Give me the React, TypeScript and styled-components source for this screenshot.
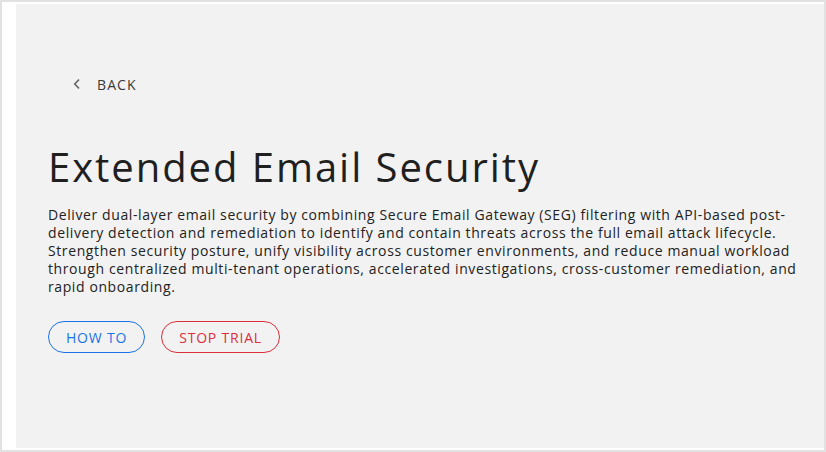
import styled, { createGlobalStyle } from "styled-components";

const GlobalStyle = createGlobalStyle`
  html, body {
    margin: 0;
    padding: 0;
    background: #ffffff;
  }
  body {
    font-family: "Open Sans", "Liberation Sans", sans-serif;
  }
`;

const Frame = styled.div`
  box-sizing: border-box;
  width: 826px;
  height: 452px;
  border: 2px solid #e2e2e2;
  background: #ffffff;
  padding: 2px 0 2px 14px;
  display: flex;
`;

const Panel = styled.div`
  flex: 1;
  background: #f2f2f2;
  padding: 70px 0 0 32px;
  display: flex;
  flex-direction: column;
`;

const BackLink = styled.a`
  display: flex;
  align-items: center;
  gap: 15px;
  margin-left: 24px;
  color: #3a3a3a;
  font-size: 14px;
  letter-spacing: 1.1px;
  text-decoration: none;
  cursor: pointer;
  height: 20px;
`;

const Title = styled.h1`
  margin: 49px 0 0;
  font-size: 40px;
  font-weight: 400;
  color: #1f1f1f;
  line-height: 48px;
  letter-spacing: 1.95px;
`;

const Description = styled.p`
  margin: 15px 0 0;
  width: 770px;
  font-size: 14px;
  line-height: 18px;
  letter-spacing: 0.6px;
  color: #222222;
`;

const Actions = styled.div`
  display: flex;
  gap: 16px;
  margin-top: 25px;
`;

const PillButton = styled.button<{ $tone: "blue" | "red" }>`
  box-sizing: border-box;
  height: 32px;
  padding: 0 17px;
  border-radius: 16px;
  background: transparent;
  font-family: inherit;
  font-size: 14px;
  letter-spacing: 0.8px;
  cursor: pointer;
  border: 1px solid ${(p) => (p.$tone === "blue" ? "#1a73e8" : "#dc2f3c")};
  color: ${(p) => (p.$tone === "blue" ? "#1a73e8" : "#dc2f3c")};
`;

const Chevron = () => (
  <svg width="10" height="12" viewBox="0 0 10 12" fill="none">
    <path d="M7 1.5 L2.8 6 L7 10.5" stroke="#6b6b6b" strokeWidth="1.8" />
  </svg>
);

export default function App() {
  return (
    <>
      <GlobalStyle />
      <Frame>
        <Panel>
          <BackLink>
            <Chevron />
            BACK
          </BackLink>
          <Title>Extended Email Security</Title>
          <Description>
            Deliver dual-layer email security by combining Secure Email Gateway
            (SEG) filtering with API-based post-delivery detection and
            remediation to identify and contain threats across the full email
            attack lifecycle. Strengthen security posture, unify visibility
            across customer environments, and reduce manual workload through
            centralized multi-tenant operations, accelerated investigations,
            cross-customer remediation, and rapid onboarding.
          </Description>
          <Actions>
            <PillButton $tone="blue">HOW TO</PillButton>
            <PillButton $tone="red">STOP TRIAL</PillButton>
          </Actions>
        </Panel>
      </Frame>
    </>
  );
}
